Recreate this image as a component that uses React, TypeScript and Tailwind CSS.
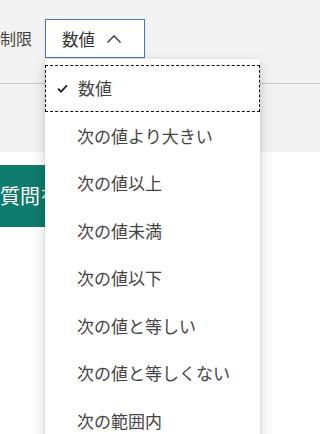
import { FC } from "react";

const options = [
  "数値",
  "次の値より大きい",
  "次の値以上",
  "次の値未満",
  "次の値以下",
  "次の値と等しい",
  "次の値と等しくない",
  "次の範囲内",
];

const Check: FC = () => (
  <svg width="11" height="9" viewBox="0 0 11 9" className="text-[#222]">
    <path d="M1 4.6 L4 7.6 L10 1.4" fill="none" stroke="currentColor" strokeWidth="1.9" />
  </svg>
);

const ChevronUp: FC = () => (
  <svg width="16" height="10" viewBox="0 0 16 10" className="text-[#333]">
    <path d="M1.5 8.5 L8 2 L14.5 8.5" fill="none" stroke="currentColor" strokeWidth="1.3" />
  </svg>
);

const App: FC = () => {
  return (
    <div
      className="relative h-[434px] w-[320px] overflow-hidden bg-white text-[#323130]"
      style={{ fontFamily: '"Noto Sans CJK JP", "Noto Sans", sans-serif' }}
    >
      <div className="h-[152px] bg-[#f3f3f3]">
        <div className="flex h-[84px] items-start gap-[13px] border-b border-[#c8c8c8] pt-[19px]">
          <span className="mt-[8px] text-[16px] leading-[22px] text-[#444]">制限</span>
          <div className="flex h-[39px] w-[100px] items-center gap-[11px] border border-[#4a78b5] bg-white pl-[16px] shadow-[0_2px_3px_rgba(0,0,0,0.08)]">
            <span className="text-[16.5px] leading-[22px] text-[#333]">数値</span>
            <ChevronUp />
          </div>
        </div>
      </div>
      <div className="pt-[13px]">
        <div className="flex h-[62px] w-[60px] items-center bg-[#0f7b6c]">
          <span className="whitespace-nowrap text-[20px] leading-[26px] text-white">質問を追加</span>
        </div>
      </div>

      <ul className="absolute left-[45px] top-[59px] w-[215px] bg-white pt-[5.5px] shadow-[0_6px_14px_rgba(0,0,0,0.16),0_1px_4px_rgba(0,0,0,0.1)]">
        {options.map((o, i) => (
          <li
            key={o}
            className={`flex h-[47.5px] items-center text-[17px] leading-[22px] text-[#444] ${
              i === 0 ? "border border-dashed border-[#111] pl-[11px]" : "pl-[32px]"
            }`}
          >
            {i === 0 && (
              <span className="mr-[10px] flex w-[11px]">
                <Check />
              </span>
            )}
            {o}
          </li>
        ))}
      </ul>
    </div>
  );
};

export default App;
